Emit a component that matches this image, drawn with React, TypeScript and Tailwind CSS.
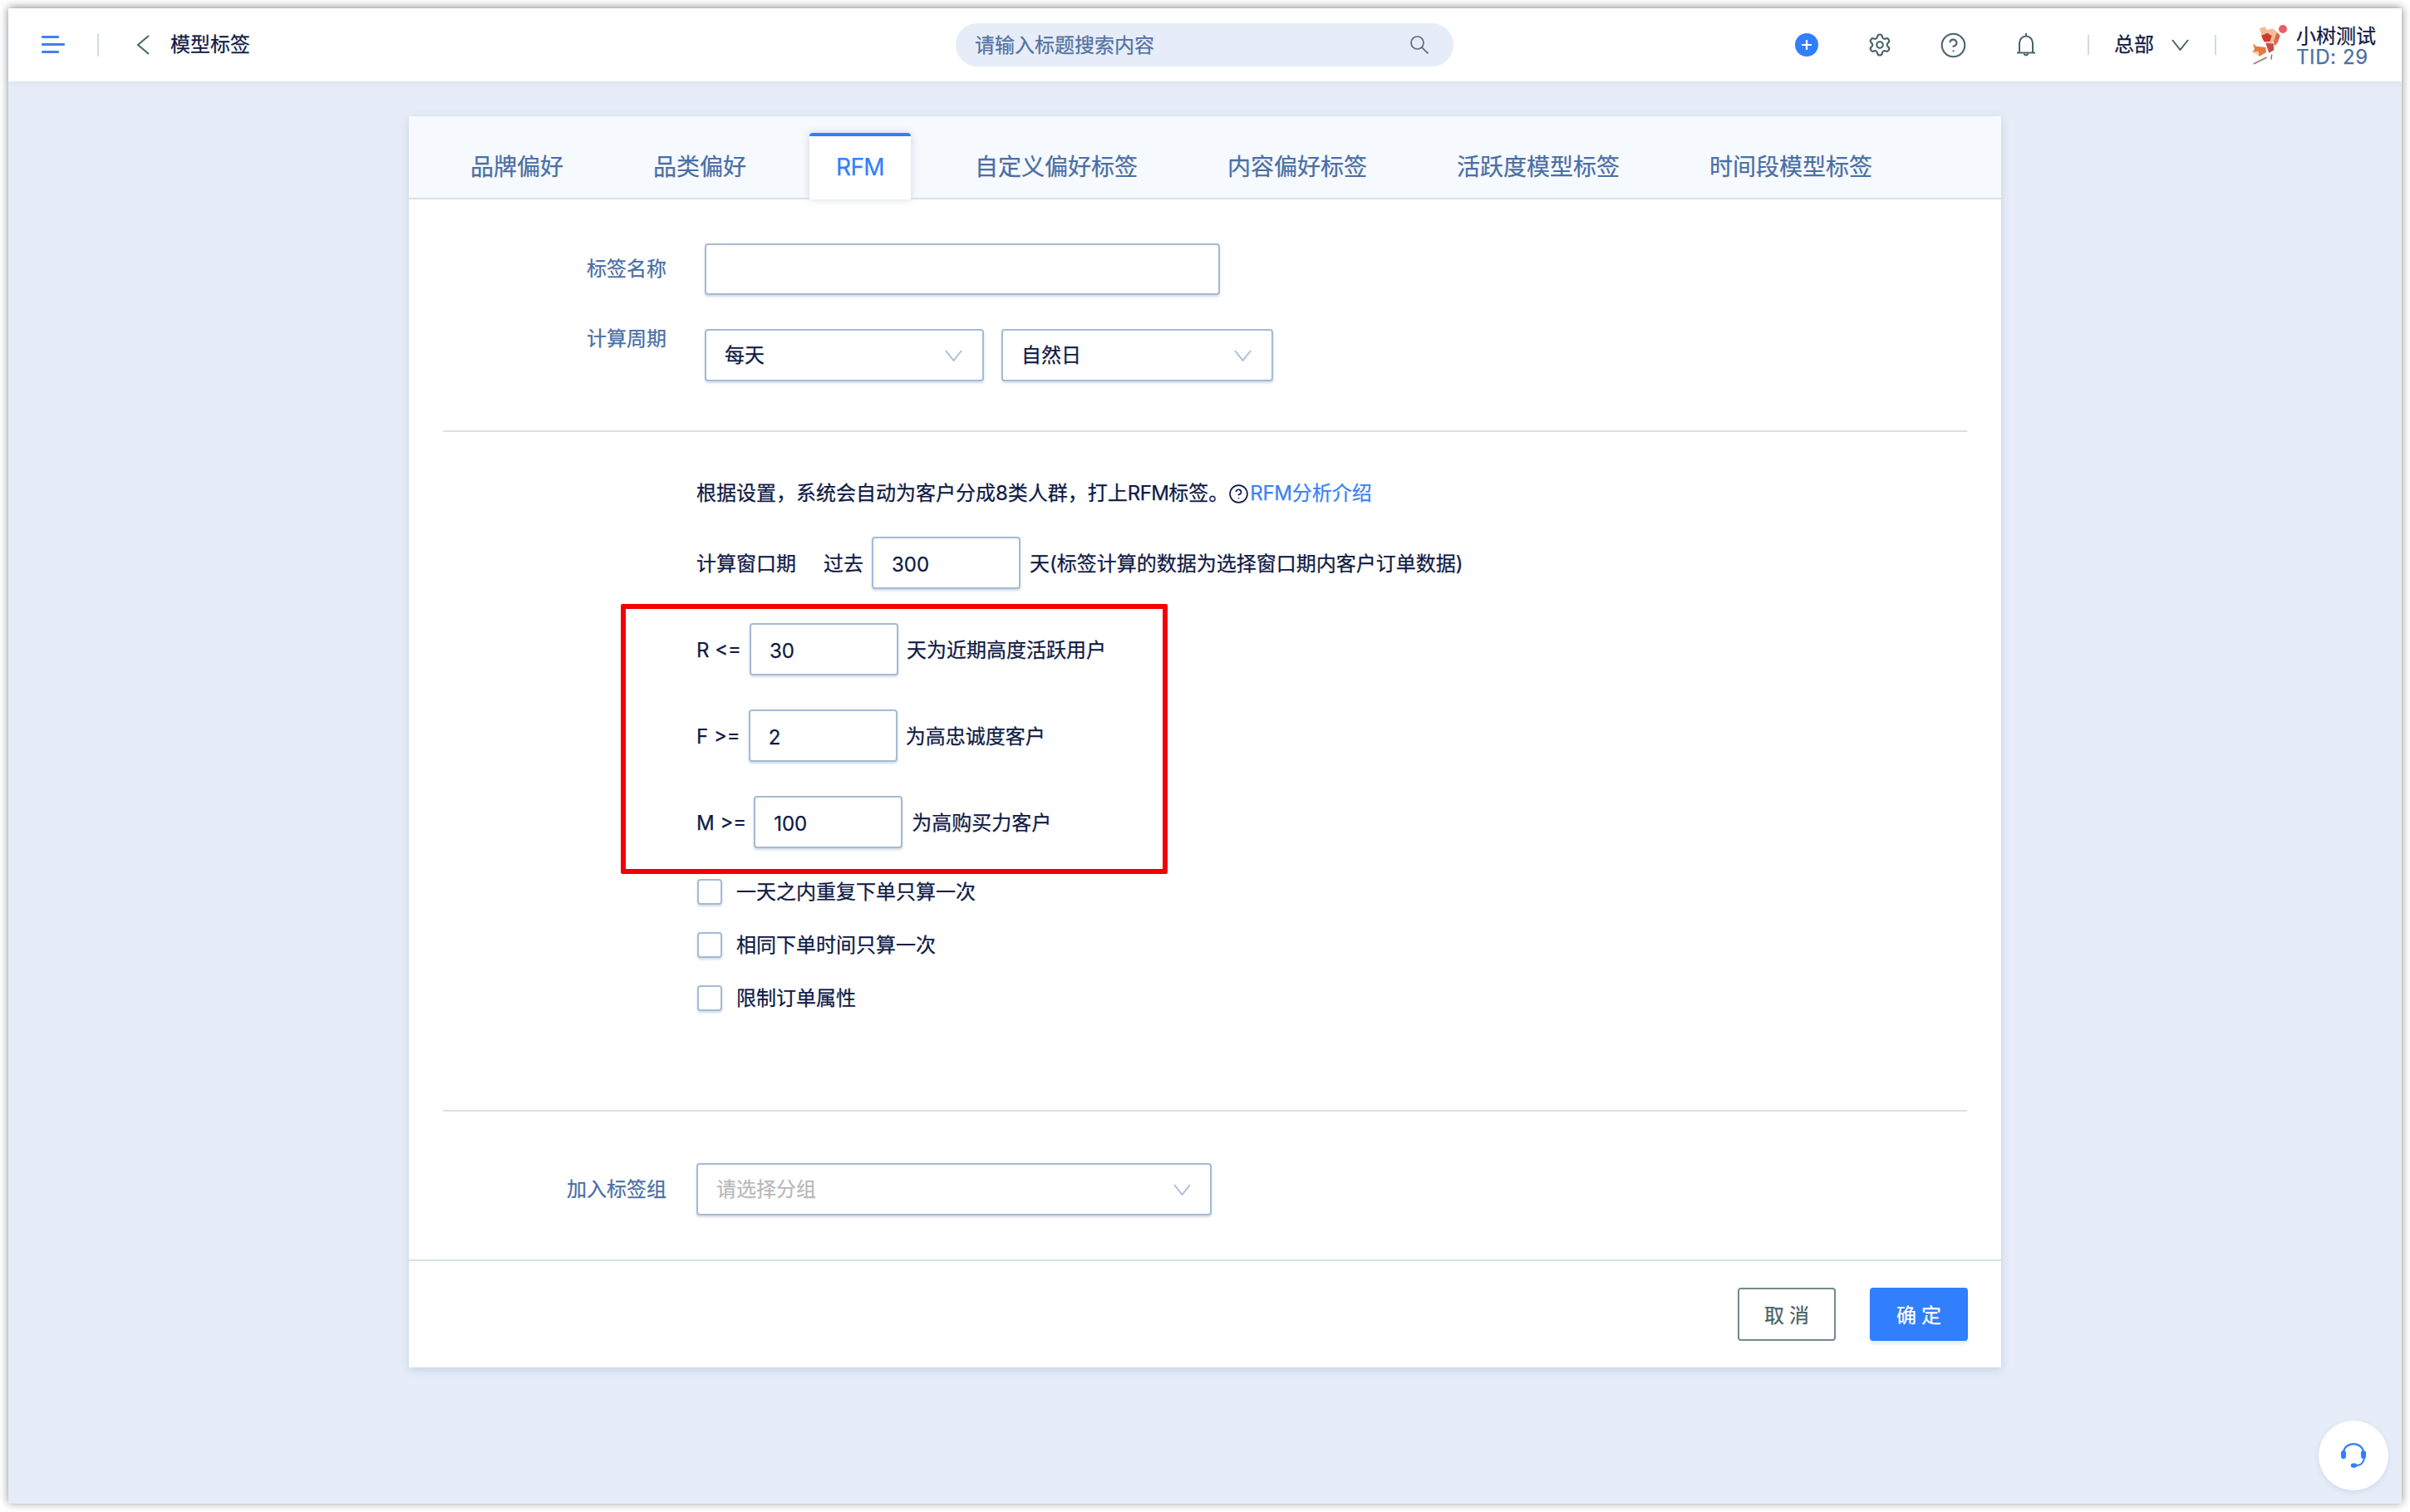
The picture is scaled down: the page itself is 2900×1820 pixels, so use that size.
import React from "react";
import { Settings, CircleHelp } from "lucide-react";

const Chevron = ({ className = "" }: { className?: string }) => (
  <svg viewBox="0 0 21 14" className={"w-[21px] h-[14px] " + className} fill="none" stroke="currentColor" strokeWidth="2">
    <polyline points="1,1 10.5,13 20,1" />
  </svg>
);

const tabs = ["品牌偏好", "品类偏好", "RFM", "自定义偏好标签", "内容偏好标签", "活跃度模型标签", "时间段模型标签"];

const boxCls =
  "box-border border-2 border-[#a5bbd3] rounded-[4px] bg-white shadow-[0_2px_3px_rgba(120,150,190,0.35)]";

const NumInput = ({ value }: { value: string }) => (
  <input
    readOnly
    value={value}
    className={boxCls + " w-[179px] h-[63px] pl-[22px] pt-[3px] text-[24px] text-[#0f1a45] outline-none"}
  />
);

const Select = ({ text, w }: { text: string; w: string }) => (
  <div className={boxCls + " h-[63px] flex items-center justify-between pl-[22px] pr-[24px] " + w}>
    <span className="text-[24px] text-[#0f1a45]">{text}</span>
    <Chevron className="text-[#a8c0d8]" />
  </div>
);

const Check = ({ label, className = "" }: { label: string; className?: string }) => (
  <div className={"flex items-center gap-[17px] h-[31px] ml-[1px] " + className}>
    <div className={boxCls + " w-[30px] h-[31px]"} />
    <span className="text-[24px] text-[#0f1a45]">{label}</span>
  </div>
);

const Fox = () => (
  <svg viewBox="45 30 120 150" className="w-[40px] h-[50px]">
    <g style={{ filter: "blur(1.2px)" }}>
      <path d="M84 44 L104 40 L112 52 L130 46 L152 62 L158 84 L140 78 L132 96 L110 104 L92 74 Z" fill="#f0ab80" opacity="0.8" />
      <path d="M90 72 L112 62 L128 72 L122 92 L100 94 Z" fill="#cf3a30" />
      <path d="M146 62 L158 70 L150 96 L138 110 L134 92 Z" fill="#d8543a" opacity="0.85" />
      <path d="M106 100 L134 100 L136 124 L118 134 Z" fill="#bd3a30" opacity="0.9" />
      <polygon points="60,100 72,110 106,114 108,132 84,146 70,136 58,132 66,120" fill="#e67a3e" />
      <polygon points="60,130 80,128 82,146 72,140" fill="#f8d0b0" />
    </g>
    <path d="M62 174 L110 150" stroke="#7a4a38" strokeWidth="4.5" fill="none" opacity="0.75" />
    <path d="M126 158 L128 140" stroke="#7a4a38" strokeWidth="4.5" fill="none" opacity="0.75" />
  </svg>
);

export default function App() {
  return (
    <div className="w-[2900px] h-[1820px] p-[10px] bg-white overflow-hidden [font-family:Inter,'Noto_Sans_CJK_SC',sans-serif] [-webkit-text-stroke:0.25px]">
      <div className="relative w-[2880px] h-[1800px] flex flex-col bg-[#e6edf8] shadow-[0_-1px_10px_rgba(0,0,0,0.45)]">
        {/* header */}
        <header className="h-[88px] shrink-0 bg-white flex items-center shadow-[0_2px_8px_rgba(120,150,190,0.12)] text-[24px] text-[#0f1a45]">
          <div className="w-[1140px] shrink-0 flex items-center pl-[40px]">
            <svg viewBox="0 0 28 22" className="w-[28px] h-[22px] text-[#3f82ee]" fill="currentColor">
              <rect x="0" y="0" width="21" height="3" rx="1" />
              <rect x="0" y="9" width="28" height="3" rx="1" />
              <rect x="0" y="18" width="21" height="3" rx="1" />
            </svg>
            <div className="ml-[39px] w-[2px] h-[28px] bg-[#d0dce6]" />
            <svg viewBox="0 0 16 24" className="ml-[45px] w-[16px] h-[24px] text-[#476468]" fill="none" stroke="currentColor" strokeWidth="2">
              <polyline points="15,1 2,12 15,23" />
            </svg>
            <span className="ml-[25px] leading-[32px]">模型标签</span>
          </div>
          <div className="w-[599px] h-[52px] rounded-full bg-[#e6edf8] flex items-center justify-between pl-[23px] pr-[30px] shrink-0">
            <span className="text-[#5472a3] pt-[2px]">请输入标题搜索内容</span>
            <svg viewBox="0 0 22 22" className="w-[22px] h-[22px] text-[#606a78]" fill="none" stroke="currentColor" strokeWidth="1.7">
              <circle cx="8.5" cy="8.5" r="7.5" />
              <path d="M13.8 13.8 L21.5 21.5" />
            </svg>
          </div>
          <div className="ml-[411px] w-[28px] h-[28px] rounded-full bg-[#317ffc] flex items-center justify-center shrink-0">
            <svg viewBox="0 0 14 14" className="w-[14px] h-[14px]" stroke="white" strokeWidth="2.2">
              <path d="M7 1v12M1 7h12" />
            </svg>
          </div>
          <Settings className="ml-[59px] w-[30px] h-[30px] text-[#476468] shrink-0" strokeWidth={1.7} />
          <CircleHelp className="ml-[57px] w-[33px] h-[33px] text-[#476468] shrink-0" strokeWidth={1.5} />
          <svg viewBox="0 0 24 30" className="ml-[59px] w-[24px] h-[30px] text-[#476468] shrink-0" fill="none" stroke="currentColor" strokeWidth="2">
            <path d="M12 1v3" />
            <path d="M4 24V13a8 8.5 0 0 1 16 0v11" />
            <path d="M1 24.5h22" />
            <path d="M9.5 25.5a2.6 2.6 0 0 0 5 0" />
          </svg>
          <div className="ml-[62px] w-[2px] h-[24px] bg-[#d0dce6] shrink-0" />
          <span className="ml-[30px] shrink-0">总部</span>
          <Chevron className="ml-[21px] text-[#476468] shrink-0" />
          <div className="ml-[31px] w-[2px] h-[24px] bg-[#d0dce6] shrink-0" />
          <div className="relative ml-[39px] shrink-0">
            <Fox />
            <div className="absolute left-[36px] top-[1px] w-[10px] h-[10px] rounded-full bg-[#ef5a67]" />
          </div>
          <div className="ml-[17px] flex flex-col shrink-0 pt-[3px]">
            <span className="leading-[27px] -mt-[1px]">小树测试</span>
            <span className="leading-[24px] text-[#4a6fa5] tracking-[0.6px]">TID: 29</span>
          </div>
        </header>

        {/* card */}
        <main className="relative ml-[482px] mt-[42px] w-[1916px] bg-white shadow-[0_3px_10px_rgba(110,140,180,0.28)]">
          <div className="flex items-end h-[100px] pl-[41px] bg-[#f6f9fe] border-b-2 border-[#d6e1ea]">
            {tabs.map((t) =>
              t === "RFM" ? (
                <div
                  key={t}
                  className="relative -mb-[2px] ml-[1px] h-[80px] w-[122px] mr-[44px] pb-[2px] flex items-center justify-center bg-white border-t-4 border-[#317ffc] rounded-t-[4px] text-[28px] tracking-[-0.6px] text-[#317ffc] shadow-[0_0_8px_rgba(120,150,180,0.35)]"
                >
                  {t}
                </div>
              ) : (
                <div key={t} className="h-[78px] px-[33px] mr-[42px] flex items-center pt-[3px] text-[28px] text-[#4a6fa5]">
                  {t}
                </div>
              )
            )}
          </div>

          <div className="flex mt-[53px]">
            <div className="w-[310px] h-[62px] flex items-center justify-end text-[24px] text-[#4a6fa5]">标签名称</div>
            <div className={boxCls + " ml-[46px] w-[620px] h-[62px]"} />
          </div>
          <div className="flex mt-[41px]">
            <div className="w-[310px] text-right text-[24px] leading-[24px] text-[#4a6fa5]">计算周期</div>
            <div className="ml-[46px] flex gap-[21px]">
              <Select text="每天" w="w-[336px]" />
              <Select text="自然日" w="w-[327px]" />
            </div>
          </div>

          <div className="mx-[41px] mt-[59px] h-[2px] bg-[#d6e1ea]" />

          <div className="pl-[346px] text-[24px] text-[#0f1a45]">
            <div className="mt-[55px] h-[36px] pt-[2px] flex items-center whitespace-nowrap">
              根据设置，系统会自动为客户分成8类人群，打上<span className="tracking-[-0.6px]">RFM</span>标签。
              <CircleHelp className="w-[25px] h-[25px] text-[#0f1a45] shrink-0" strokeWidth={1.6} />
              <span className="text-[#3b82f6] pl-[1px]"><span className="tracking-[-0.3px]">RFM</span>分析介绍</span>
            </div>

            <div className="mt-[35px] h-[63px] flex items-center whitespace-nowrap">
              <span className="pt-[2px]">计算窗口期</span>
              <span className="ml-[33px] pt-[2px]">过去</span>
              <span className="ml-[10px]"><NumInput value="300" /></span>
              <span className="ml-[11px] pt-[2px]">天(标签计算的数据为选择窗口期内客户订单数据)</span>
            </div>

            <div className="mt-[41px] h-[63px] flex items-center whitespace-nowrap">
              <span className="pt-[2px]">{"R <="}</span>
              <span className="ml-[10px]"><NumInput value="30" /></span>
              <span className="ml-[10px] pt-[2px]">天为近期高度活跃用户</span>
            </div>
            <div className="mt-[41px] h-[63px] flex items-center whitespace-nowrap">
              <span className="pt-[2px]">{"F >="}</span>
              <span className="ml-[10px]"><NumInput value="2" /></span>
              <span className="ml-[10px] pt-[2px]">为高忠诚度客户</span>
            </div>
            <div className="mt-[41px] h-[63px] flex items-center whitespace-nowrap">
              <span className="pt-[2px]">{"M >="}</span>
              <span className="ml-[9px]"><NumInput value="100" /></span>
              <span className="ml-[11px] pt-[2px]">为高购买力客户</span>
            </div>

            <Check label="一天之内重复下单只算一次" className="mt-[37px]" />
            <Check label="相同下单时间只算一次" className="mt-[33px]" />
            <Check label="限制订单属性" className="mt-[33px]" />
          </div>

          <div className="mx-[41px] mt-[119px] h-[2px] bg-[#d6e1ea]" />

          <div className="flex mt-[62px]">
            <div className="w-[310px] h-[63px] flex items-center justify-end text-[24px] text-[#4a6fa5]">加入标签组</div>
            <div className={boxCls + " ml-[36px] w-[620px] h-[63px] flex items-center justify-between pl-[22px] pr-[23px]"}>
              <span className="text-[24px] text-[#b9b9b9]">请选择分组</span>
              <Chevron className="text-[#a8c0d8]" />
            </div>
          </div>

          <div className="mt-[53px] h-[2px] bg-[#d6e1ea]" />

          <div className="flex justify-end gap-[41px] pt-[32px] pb-[32px] pr-[40px]">
            <button className="box-border w-[118px] h-[64px] pl-[6px] pt-[3px] border-2 border-[#76898f] rounded-[4px] bg-white text-[24px] tracking-[6px] text-[#4a6266]">
              取消
            </button>
            <button className="w-[118px] h-[64px] pl-[6px] pt-[3px] rounded-[4px] bg-[#317ffc] text-[24px] tracking-[6px] text-white shadow-[0_4px_3px_rgba(120,130,150,0.15)]">
              确定
            </button>
          </div>

          {/* red annotation */}
          <div className="absolute left-[255px] top-[587px] w-[658px] h-[325px] border-[6px] border-[#f40000] rounded-[2px] pointer-events-none" />
        </main>

        {/* support */}
        <div className="absolute left-[2780px] top-[1700px] w-[84px] h-[84px] rounded-full bg-white flex items-center justify-center shadow-[0_2px_6px_rgba(110,140,180,0.2)]">
          <svg viewBox="0 0 32 30" className="w-[32px] h-[30px] text-[#317ffc]" fill="none" stroke="currentColor" strokeWidth="2.2">
            <path d="M4 12 C4 5.5 9.5 1.2 16 1.2 C22.500 1.200 28 5.500 28 12" />
            <path d="M29 18 C28.500 23.500 24.500 26.500 20 27" />
            <rect x="1" y="9" width="6" height="10" rx="3" fill="currentColor" stroke="none" />
            <rect x="25" y="9" width="6" height="10" rx="3" fill="currentColor" stroke="none" />
            <ellipse cx="16.500" cy="27" rx="3.800" ry="2.800" fill="currentColor" stroke="none" />
          </svg>
        </div>
      </div>
    </div>
  );
}
